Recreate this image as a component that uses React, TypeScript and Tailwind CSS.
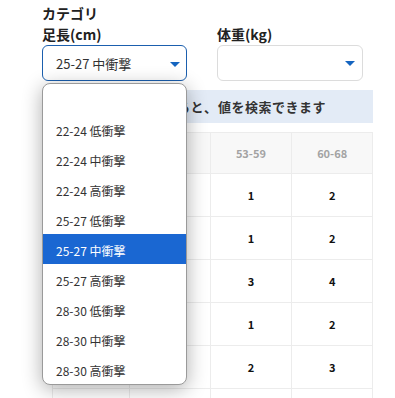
const font = { fontFamily: '"Noto Sans CJK JP", "Noto Sans", sans-serif' };

const options = [
  "",
  "22-24 低衝撃",
  "22-24 中衝撃",
  "22-24 高衝撃",
  "25-27 低衝撃",
  "25-27 中衝撃",
  "25-27 高衝撃",
  "28-30 低衝撃",
  "28-30 中衝撃",
  "28-30 高衝撃",
];

// first two columns sit under the open list, so nothing of them shows
const headers = ["", "", "53-59", "60-68"];
const rows = [
  ["", "", "1", "2"],
  ["", "", "1", "2"],
  ["", "", "3", "4"],
  ["", "", "1", "2"],
  ["", "", "2", "3"],
  ["", "", "", ""],
];
const widths = ["w-[77px]", "w-[81px]", "w-[82px]", "w-[81px]"];

function Arrow() {
  return (
    <svg width="10" height="5" viewBox="0 0 10 5">
      <path d="M0 0h10L5 5z" fill="#1565c0" />
    </svg>
  );
}

export default function App() {
  return (
    <div className="relative h-[398px] w-[395px] overflow-hidden bg-white text-[#212121]" style={font}>
      <div className="pl-[42px] pt-[3px]">
        <div className="text-[14px] font-bold leading-[21px]">カテゴリ</div>
        <div className="flex gap-[30px]">
          <div className="w-[145px]">
            <div className="text-[14px] font-bold leading-[21px]">足長(cm)</div>
            <div className="flex h-[36px] items-center justify-between rounded-[6px] border border-[#1b5fae] pl-[13px] pr-[6px] pt-[2px] text-[13px] text-[#333]">
              <span>25-27 中衝撃</span>
              <Arrow />
            </div>
          </div>
          <div className="w-[146px]">
            <div className="text-[14px] font-bold leading-[21px]">体重(kg)</div>
            <div className="flex h-[36px] items-center justify-end rounded-[6px] border border-[#dcdcdc] pr-[7px] pt-[1px]">
              <Arrow />
            </div>
          </div>
        </div>
      </div>

      <div className="ml-[52px] mt-[9px] w-[321px]">
        <div className="flex h-[33px] items-center bg-[#e3ebf6] pl-[17px] text-[13px] font-semibold tracking-[0.5px] text-[#333]">
          <span>カテゴリを選択すると</span>
          <span className="inline-block w-[14px]">、</span>
          <span>値を検索できます</span>
        </div>
        <div className="mt-[9px] border-l border-t border-[#ececec]">
          <div className="flex h-[41px] bg-[#f8f8f8]">
            {headers.map((h, i) => (
              <div
                key={i}
                className={`${widths[i]} flex items-center justify-center border-b border-r border-[#ececec] text-[11px] font-bold text-[#a3a3a3]`}
              >
                {h}
              </div>
            ))}
          </div>
          {rows.map((r, ri) => (
            <div key={ri} className="flex h-[43px]">
              {r.map((v, i) => (
                <div
                  key={i}
                  className={`${widths[i]} flex items-center justify-center border-b border-r border-[#ececec] text-[11px] font-bold text-[#111]`}
                >
                  {v}
                </div>
              ))}
            </div>
          ))}
        </div>
      </div>

      {/* open native select list */}
      <div className="absolute left-[42px] top-[83px] w-[145px] overflow-hidden rounded-[8px] border border-[#9a9a9a] bg-white shadow-[0_4px_20px_rgba(0,0,0,0.32)]">
        {options.map((o, i) => (
          <div
            key={i}
            className={`flex h-[30px] items-center pl-[13px] pt-[3px] text-[12px] ${
              o === "25-27 中衝撃" ? "bg-[#1a67d2] text-white" : "text-[#333]"
            }`}
          >
            {o}
          </div>
        ))}
      </div>
    </div>
  );
}
